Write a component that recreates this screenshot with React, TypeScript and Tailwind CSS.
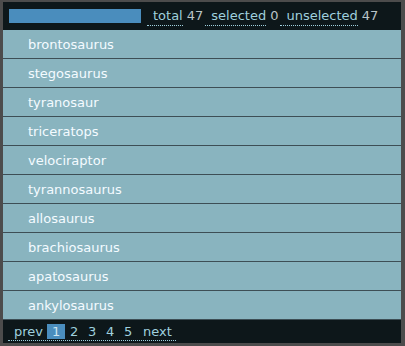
const dinos = [
  'brontosaurus',
  'stegosaurus',
  'tyranosaur',
  'triceratops',
  'velociraptor',
  'tyrannosaurus',
  'allosaurus',
  'brachiosaurus',
  'apatosaurus',
  'ankylosaurus',
];

const pages = ['2', '3', '4', '5'];

export default function App() {
  return (
    <div
      className="w-[405px] h-[346px] bg-[#4c4c4c] pl-[3px] pr-[4px] pt-[2px] pb-[3px]"
      style={{ fontFamily: '"DejaVu Sans", Verdana, sans-serif' }}
    >
      <div className="h-full bg-[#0d171a] flex flex-col text-[13px]">
        {/* header: progress bar + counters */}
        <div className="h-[28px] flex items-center pl-[6px]">
          <div className="w-[132px] h-[14px] bg-[#4a8dbd]" />
          <div className="flex items-center ml-[6px] text-[#b9c3c6] leading-none pt-[2px]">
            <span className="pl-[6px] pb-[3px] border-b border-dotted border-[#9fd0de] text-[#9fd0de]">total</span>
            <span className="ml-[4px] pb-[3px]">47</span>
            <span className="ml-[2px] pl-[6px] pb-[3px] border-b border-dotted border-[#9fd0de] text-[#9fd0de]">selected</span>
            <span className="ml-[4px] pb-[3px]">0</span>
            <span className="ml-[2px] pl-[6px] pb-[3px] border-b border-dotted border-[#9fd0de] text-[#9fd0de]">unselected</span>
            <span className="ml-[4px] pb-[3px]">47</span>
          </div>
        </div>

        {/* list */}
        <div className="flex flex-col">
          {dinos.map((d) => (
            <div
              key={d}
              className="h-[29px] flex items-center pl-[25px] pt-[2px] bg-[#89b4bf] border-b border-[#3d4e55] text-[#f4fbff]"
            >
              {d}
            </div>
          ))}
        </div>

        {/* pager */}
        <div className="flex-1 flex items-center pl-[5px] pt-[1px]">
          <div className="flex items-center border-b border-dotted border-[#9fd0de] text-[#9fd0de] pl-[6px] pr-[4px] h-[17px] leading-none">
            <span>prev</span>
            <span className="ml-[4px] w-[18px] h-[15px] flex items-center justify-center bg-[#4a8dbd] text-[#cfe6f0]">1</span>
            {pages.map((p) => (
              <span key={p} className="w-[18px] text-center">
                {p}
              </span>
            ))}
            <span className="ml-[6px]">next</span>
          </div>
        </div>
      </div>
    </div>
  );
}
